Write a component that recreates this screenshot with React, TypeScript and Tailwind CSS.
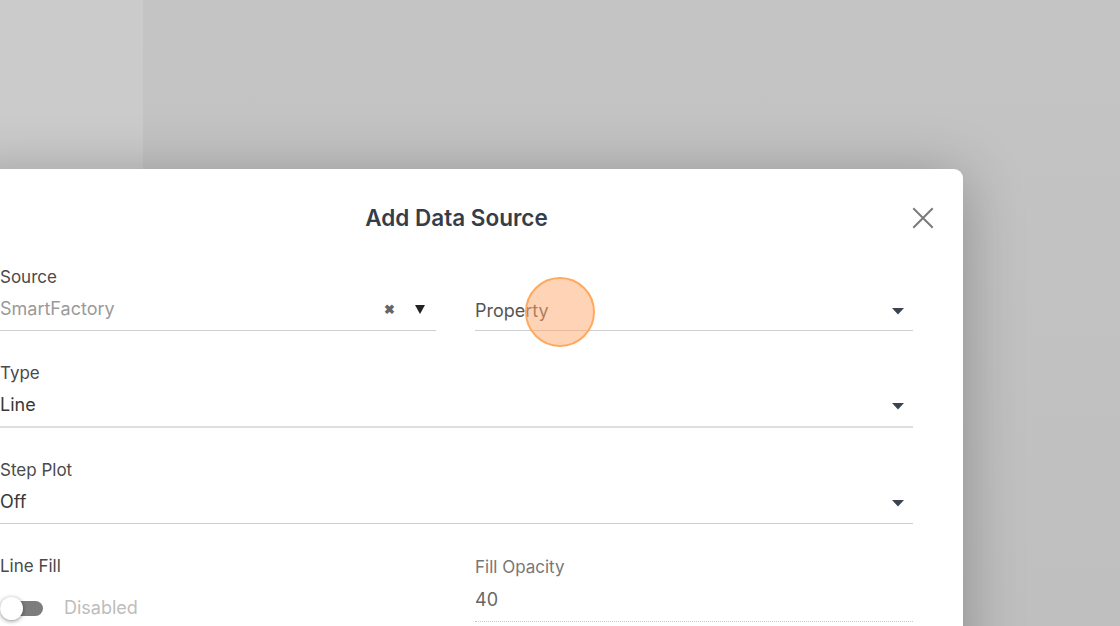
import React from 'react';

const font = { fontFamily: 'Inter, "Noto Sans", sans-serif' };

const Caret: React.FC<{ className?: string }> = ({ className }) => (
  <svg width="14" height="8" viewBox="0 0 14 8" className={className}>
    <path d="M1 1h12L7 7.5z" fill="#3b4352" />
  </svg>
);

const Field: React.FC<{
  label?: string;
  value: string;
  valueClass: string;
  border: string;
  right?: React.ReactNode;
  labelClass?: string;
}> = ({ label, value, valueClass, border, right, labelClass = 'text-[#4a4a4a]' }) => (
  <div className="flex flex-col">
    <div className={`h-6 leading-6 text-[17px] ${labelClass}`}>{label}</div>
    <div className={`flex items-center justify-between pt-[8px] pb-[9px] ${border}`}>
      <span className={`leading-6 text-[18px] ${valueClass}`}>{value}</span>
      {right}
    </div>
  </div>
);

const App: React.FC = () => {
  return (
    <div className="relative h-[626px] w-[1120px] overflow-hidden flex" style={font}>
      {/* Backdrop */}
      <div className="w-[143px] h-full bg-[#cbcbcb]" />
      <div className="flex-1 h-full bg-gradient-to-b from-[#c4c4c4] to-[#bfbfbf]" />

      {/* Dialog */}
      <div className="absolute top-[169px] left-[-50px] w-[1013px] h-[520px] bg-white rounded-tr-[9px] shadow-[0_8px_60px_rgba(0,0,0,0.28)] px-[50px] pt-[35px]">
        <div className="relative flex items-center justify-center h-7">
          <h2 className="text-[22.5px] leading-7 font-semibold text-[#363d4a]">Add Data Source</h2>
          <button className="absolute right-[-21px] top-[3px] text-[#7a7a7a]">
            <svg width="22" height="22" viewBox="0 0 22 22">
              <path d="M2 2l18 18M20 2L2 20" stroke="#7a7a7a" strokeWidth="2" strokeLinecap="square" />
            </svg>
          </button>
        </div>

        <div className="mt-[33px] flex flex-col gap-[30px]">
          <div className="grid grid-cols-[436px_438px] gap-[39px]">
            <Field
              label="Source"
              value="SmartFactory"
              valueClass="text-[#9a9a9a]"
              border="border-b border-[#cfcfcf]"
              right={
                <div className="flex items-center gap-[20px] pr-[11px]">
                  <span className="text-[13px] text-[#666] leading-none font-bold">✖</span>
                  <svg width="10" height="9" viewBox="0 0 10 9">
                    <path d="M0 0h10L5 9z" fill="#222" />
                  </svg>
                </div>
              }
            />
            <div className="flex flex-col">
              <div className="h-6" />
              <div className="flex items-center justify-between pt-[10px] pb-[7px] border-b border-[#cfcfcf]">
                <span className="leading-6 text-[18px] text-[#555]">Property</span>
                <Caret className="mr-[8px]" />
              </div>
            </div>
          </div>

          <div className="w-[913px]">
            <Field
              label="Type"
              value="Line"
              valueClass="text-[#383838]"
              border="border-b-2 border-[#dedede] pb-[8px]"
              right={<Caret className="mr-[8px] mt-[2px]" />}
            />
          </div>

          <div className="w-[913px]">
            <Field
              label="Step Plot"
              value="Off"
              valueClass="text-[#383838]"
              border="border-b border-[#cfcfcf]"
              right={<Caret className="mr-[8px] mt-[2px]" />}
            />
          </div>

          <div className="grid grid-cols-[436px_438px] gap-[39px]">
            <div className="flex flex-col">
              <div className="h-6 leading-6 text-[17px] text-[#4a4a4a]">Line Fill</div>
              <div className="flex items-center gap-[20px] pt-[18px]">
                <div className="relative w-[44px] h-[22px] flex items-center">
                  <div className="w-[43px] h-[15px] rounded-full bg-[#7d7d7d]" />
                  <div className="absolute left-0 top-0 w-[23px] h-[23px] rounded-full bg-white shadow-[0_1px_4px_rgba(0,0,0,0.45)]" />
                </div>
                <span className="text-[18px] leading-6 text-[#bdbdbd]">Disabled</span>
              </div>
            </div>
            <div className="flex flex-col">
              <div className="h-6 leading-6 text-[17px] text-[#777] mt-[1px]">Fill Opacity</div>
              <div className="flex items-center pt-[9px] pb-[9px] border-b border-dotted border-[#c8c8c8]">
                <span className="leading-6 text-[18px] text-[#666]">40</span>
              </div>
            </div>
          </div>
        </div>
      </div>

      {/* Click indicator */}
      <div className="absolute left-[525px] top-[277px] w-[70px] h-[70px] rounded-full bg-[rgba(255,170,110,0.5)] border-2 border-[#ffa95e]" />
    </div>
  );
};

export default App;
